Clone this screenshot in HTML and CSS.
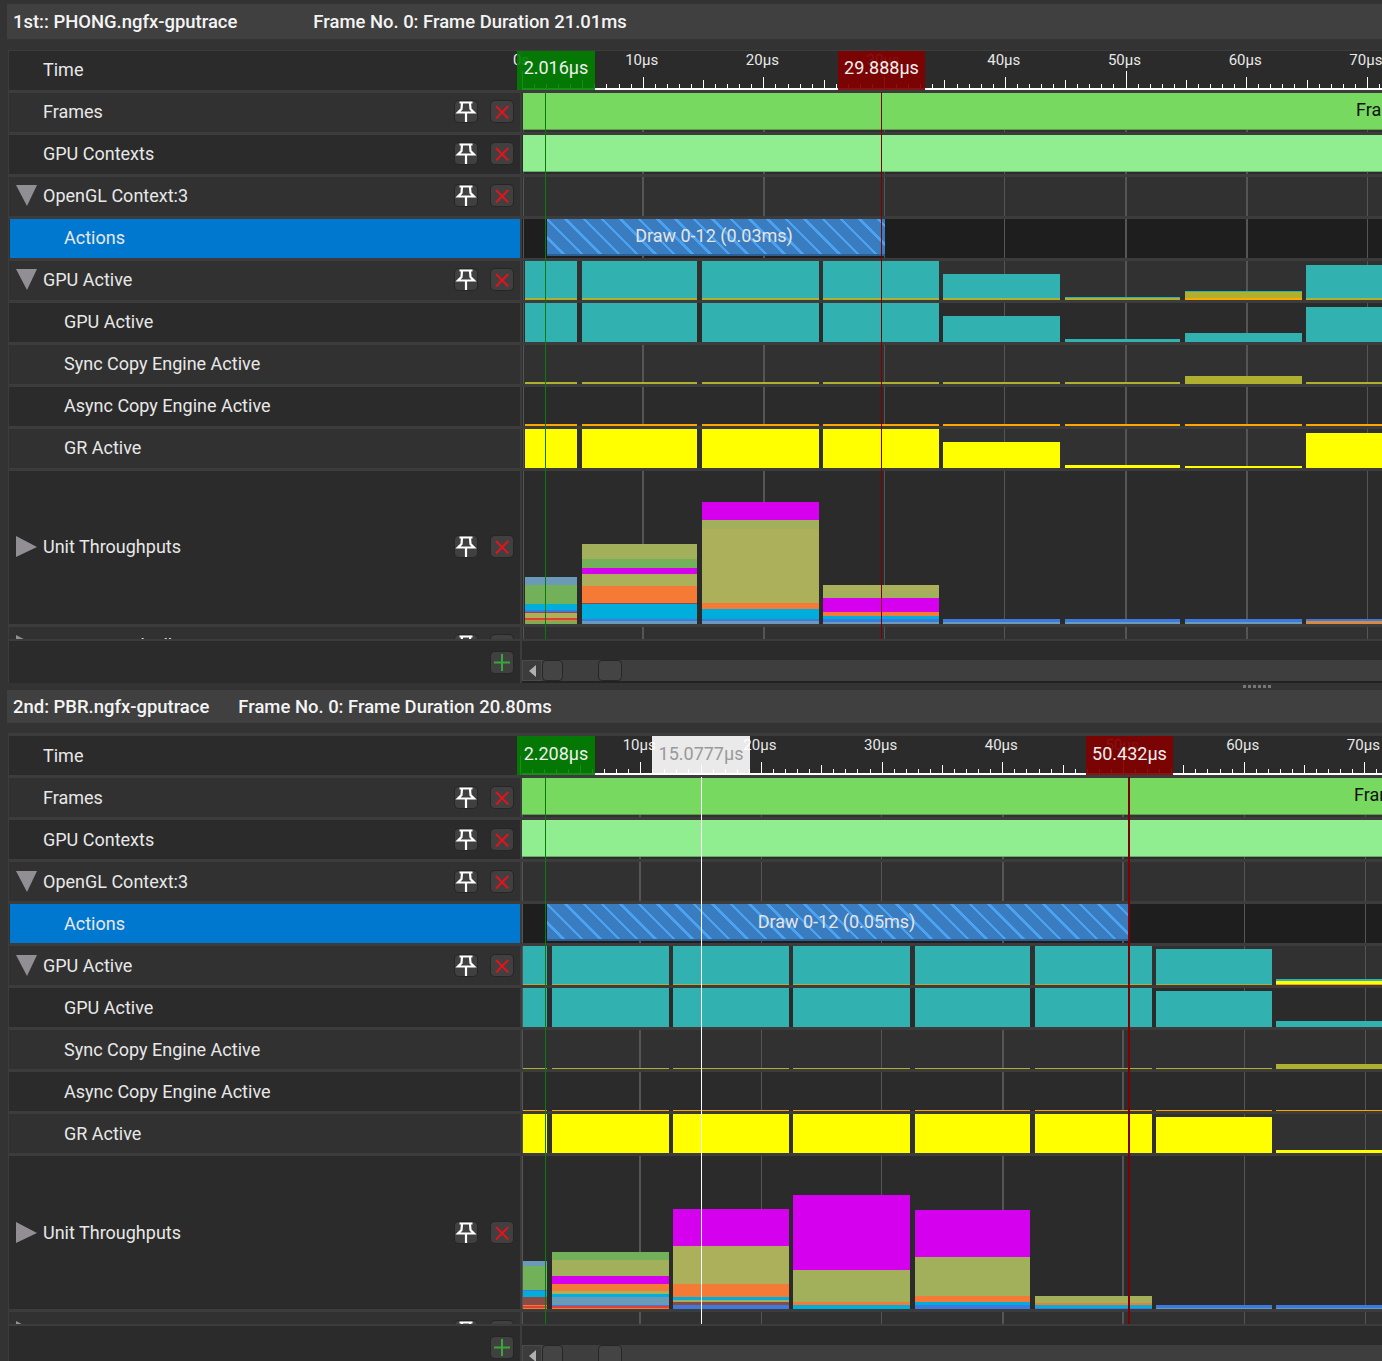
FILE: index.html
```html
<!DOCTYPE html>
<html lang="en">
<head>
    <meta charset="UTF-8">
    <title>Frame Compare</title>
    <link rel="stylesheet" href="styles.css">
</head>
<body>
    <section class="panel panel-first">
        <div class="title-bar">
            <span>1st:: PHONG.ngfx-gputrace</span>
            <span class="frame-info">Frame No. 0: Frame Duration 21.01ms</span>
        </div>
        <div class="view" id="view1"></div>
        <div class="splitter"><i></i><i></i><i></i><i></i><i></i><i></i></div>
    </section>
    <section class="panel panel-second">
        <div class="title-bar">
            <span>2nd: PBR.ngfx-gputrace</span>
            <span class="frame-info">Frame No. 0: Frame Duration 20.80ms</span>
        </div>
        <div class="view" id="view2"></div>
    </section>
    <script src="script.js"></script>
</body>
</html>
```

FILE: styles.css
```css
html, body {
    margin: 0;
    height: 1361px;
    overflow: hidden;
}
body {
    font-family: Roboto, "Liberation Sans", sans-serif;
    font-size: 18px;
    color: #e8e8e8;
    background: #333;
}
.title-bar {
    display: flex;
    align-items: center;
    margin-left: 7px;
    padding-left: 6px;
    background: #404040;
    color: #f4f4f4;
    font-size: 18.45px;
    font-weight: 500;
}
.panel-first { padding-top: 4px; }
.panel-first .title-bar { height: 35px; margin-bottom: 11px; }
.panel-first .frame-info { margin-left: 76px; }
.panel-first .view { height: 632px; border-top: 1px solid #3c3c3c; }
.panel-first .label { padding-bottom: 2px; }
.panel-second .title-bar { height: 33px; margin-bottom: 10px; }
.panel-second .frame-info { margin-left: 29px; }
.panel-second .view { height: 625px; border-top: 3px solid #3c3c3c; }
.panel-second .flag { line-height: 36px; }
.panel-second .draw { line-height: 36px; }

.view {
    position: relative;
    margin-left: 8px;
    border-left: 1px solid #3c3c3c;
    overflow: hidden;
}
.splitter {
    display: flex;
    align-items: center;
    gap: 2px;
    height: 7px;
    padding-left: 1243px;
}
.splitter i {
    width: 3px;
    height: 3px;
    background: #777;
}

/* rows */
.row {
    display: flex;
    height: 39px;
    border-bottom: 3px solid #3c3c3c;
}
.row-tall { height: 153px; }
.shade-a { background: #313131; }
.shade-b { background: #2b2b2b; }
.label {
    display: flex;
    align-items: center;
    flex: none;
    width: 513px;
    padding-left: 34px;
    box-sizing: border-box;
    border-right: 2px solid #3c3c3c;
}
.label-twisty { padding-left: 7px; }
.label-sub { padding-left: 55px; }
.label-selected {
    margin-left: 1px;
    width: 512px;
    padding-left: 54px;
    background: #0078d0;
}
.twisty {
    flex: none;
    margin-right: 6px;
    width: 0;
    height: 0;
}
.twisty-down {
    border-left: 11px solid transparent;
    border-right: 10px solid transparent;
    border-top: 21px solid #918f94;
}
.twisty-right {
    border-top: 11px solid transparent;
    border-bottom: 10px solid transparent;
    border-left: 21px solid #918f94;
}
.actions {
    display: flex;
    gap: 14px;
    margin-left: auto;
    margin-right: 7px;
}
.btn {
    display: block;
    width: 22px;
    height: 21px;
    box-sizing: border-box;
    background: #404040;
    border-radius: 4px;
    box-shadow: 0 0 0 1px #262626;
}
.btn svg {
    display: block;
    fill: none;
    stroke-width: 2;
}
.btn .pin {
    stroke: #fff;
    stroke-width: 2.2;
}
.close { stroke: #e0141c; }
.add { stroke: #3aa53a; }

/* tracks */
.track {
    position: relative;
    flex: 1;
    overflow: hidden;
}
.track-dark { background: #1e1e1e; }
.grid {
    position: absolute;
    top: 0;
    bottom: 0;
    background: #555;
}
.bar {
    position: absolute;
    bottom: 0;
    display: flex;
    flex-direction: column;
}
.fill-frames, .fill-contexts {
    position: absolute;
    top: 0;
    right: 0;
    height: 37px;
    box-sizing: border-box;
}
.fill-frames {
    background: #78d961;
    border-bottom: 1px solid #5c9e4c;
    color: #111;
    line-height: 34px;
}
.fill-frames span {
    position: absolute;
    white-space: nowrap;
}
.fill-contexts {
    background: #90ee90;
    border-bottom: 1px solid #6aad6a;
}
.draw {
    position: absolute;
    top: 0;
    height: 37px;
    box-sizing: border-box;
    padding-right: 4px;
    border-bottom: 2px solid #2c5f92;
    background: repeating-linear-gradient(45deg, #3a7cc0 0 10.5px, #4aa2f0 10.5px 13px);
    text-align: center;
    line-height: 34px;
    color: #e4e4e4;
}
.c-a2 { background: #a2b05c; }
.c-ol { background: #adb05a; }
.c-gr { background: #72b05a; }
.c-mg { background: #d500ee; }
.c-or { background: #f57a35; }
.c-cy { background: #00aedb; }
.c-bl { background: #3d7ae0; }
.c-st { background: #6a9ab8; }
.c-br { background: #8a4a45; }
.c-rd { background: #e0402f; }
.c-ob { background: #d98a40; }
.c-teal { background: #31b2b0; }
.c-sync { background: #b0b030; }
.c-amber { background: #ffa500; }
.c-yellow { background: #ffff00; }

/* ruler */
.ruler {
    position: relative;
    flex: 1;
}
.ruler-line {
    position: absolute;
    left: 0;
    right: 0;
    bottom: 0;
    height: 2px;
    background: #fff;
}
.tick {
    position: absolute;
    bottom: 0;
    width: 1px;
    height: 6px;
    background: #fff;
}
.tick-5 { height: 10px; }
.tick-10 { height: 13px; }
.tick-50 { height: 19px; }
.time {
    position: absolute;
    top: 0;
    width: 60px;
    margin-left: -31px;
    text-align: center;
    font-size: 15px;
    line-height: 18px;
}

/* overlays */
.marker {
    position: absolute;
    top: 41px;
    height: 547px;
    width: 1px;
}
.marker-green { background: #0a7a0a; }
.marker-red { background: #800000; }
.marker-wide { width: 2px; }
.marker-white { background: #fff; }
.flag {
    position: absolute;
    top: 0;
    height: 39px;
    text-align: center;
    line-height: 34px;
    color: #f0f0f0;
}
.flag-green { background: rgba(0, 128, 0, 0.9); }
.flag-red { background: rgba(128, 0, 0, 0.93); }
.flag-white {
    background: rgba(255, 255, 255, 0.9);
    color: #999;
}
.footer {
    position: absolute;
    top: 588px;
    left: 0;
    right: 0;
    height: 42px;
    display: flex;
    background: #2b2b2b;
    border-top: 2px solid #3c3c3c;
}
.footer-left {
    display: flex;
    justify-content: flex-end;
    align-items: flex-start;
    flex: none;
    width: 513px;
    padding: 11px 7px 0 0;
    box-sizing: border-box;
    border-right: 2px solid #3c3c3c;
}
.scrollbar {
    display: flex;
    flex: 1;
    height: 21px;
    margin-top: 19px;
    background: #3e3e3e;
    box-shadow: 0 2px 0 #222;
}
.scroll-arrow {
    display: flex;
    align-items: center;
    justify-content: center;
    width: 20px;
    height: 21px;
    box-sizing: border-box;
    background: #3c3c3c;
    border: 1px solid #4a4a4a;
}
.scroll-arrow::before {
    content: "";
    border-top: 6px solid transparent;
    border-bottom: 6px solid transparent;
    border-right: 7px solid #b0b0b0;
}
.thumb {
    width: 21px;
    height: 21px;
    box-sizing: border-box;
    background: #444;
    border: 1px solid #262626;
    border-radius: 4px;
}
.thumb-end {
    width: 24px;
    margin-left: 35px;
}
```

FILE: script.js
```js
const PIN = '<svg class="pin" width="22" height="21" viewBox="0 0 22 21"><path d="M4.5 1.5H17.5M7 2L6.5 8L3 11.5H19L15.5 8L15 2M11 12V21"/></svg>';
const CLOSE = '<svg class="close" width="22" height="21" viewBox="0 0 22 21"><path d="M5 5L17.3 17.5M17.3 5L5 17.5"/></svg>';
const ADD = '<svg class="add" width="22" height="21" viewBox="0 0 22 21"><path d="M11 2V19M3 10.5H19"/></svg>';
const TRACK_LEFT = 522;

const ROWS = [
    { key: 'frames', name: 'Frames', shade: 'a', actions: true },
    { key: 'contexts', name: 'GPU Contexts', shade: 'b', actions: true },
    { key: 'opengl', name: 'OpenGL Context:3', shade: 'a', actions: true, twisty: 'down' },
    { key: 'draw', name: 'Actions', shade: 'a', sub: true, selected: true },
    { key: 'gpu', name: 'GPU Active', shade: 'a', actions: true, twisty: 'down' },
    { key: 'gpuSub', name: 'GPU Active', shade: 'b', sub: true },
    { key: 'sync', name: 'Sync Copy Engine Active', shade: 'a', sub: true },
    { key: 'async', name: 'Async Copy Engine Active', shade: 'b', sub: true },
    { key: 'gr', name: 'GR Active', shade: 'a', sub: true },
    { key: 'unit', name: 'Unit Throughputs', shade: 'b', actions: true, twisty: 'right', tall: true },
    { key: 'hiddenA', name: 'Compressed Fill', shade: 'a', actions: true, twisty: 'right' },
    { key: 'hiddenB', name: 'Unit Utilization', shade: 'b', actions: true, twisty: 'right' }
];

// each stack: [colour class, height] from top to bottom
const panels = [
    {
        id: 'view1',
        zero: 522,
        pxPerUs: 12.07,
        showZero: true,
        fillFrom: 523,
        grid: [[523, 1], [642, 2], [763, 2], [884, 1], [1004, 1], [1125, 2], [1246, 2], [1367, 1]],
        cols: [[525, 577], [582, 697], [702, 819], [823, 939], [943, 1060], [1065, 1180], [1185, 1302], [1306, 1400]],
        frameText: 1356,
        draw: { from: 547, to: 885, text: 'Draw 0-12 (0.03ms)' },
        flags: [
            { cls: 'flag-green', from: 517, to: 595, text: '2.016\u00b5s' },
            { cls: 'flag-red', from: 838, to: 925, text: '29.888\u00b5s' }
        ],
        markers: [['marker-green', 545], ['marker-red', 881]],
        gpu: [[['c-teal', 37], ['c-sync', 2]], [['c-teal', 37], ['c-sync', 2]], [['c-teal', 37], ['c-sync', 2]], [['c-teal', 37], ['c-sync', 2]],
            [['c-teal', 24], ['c-sync', 2]], [['c-teal', 1], ['c-sync', 2]], [['c-teal', 1], ['c-sync', 6], ['c-amber', 2]], [['c-teal', 33], ['c-sync', 2]]],
        gpuSub: [39, 39, 39, 39, 26, 3, 9, 35].map(h => [['c-teal', h]]),
        sync: [2, 2, 2, 2, 2, 2, 8, 2].map(h => [['c-sync', h]]),
        async: [2, 2, 2, 2, 2, 2, 2, 2].map(h => [['c-amber', h]]),
        gr: [39, 39, 39, 39, 26, 3, 2, 35].map(h => [['c-yellow', h]]),
        unit: [
            [['c-st', 8], ['c-gr', 19], ['c-cy', 6], ['c-bl', 2], ['c-br', 1], ['c-ol', 5], ['c-rd', 2], ['c-or', 1], ['c-gr', 3]],
            [['c-a2', 15], ['c-gr', 9], ['c-mg', 6], ['c-ol', 12], ['c-or', 17], ['c-br', 1], ['c-cy', 15], ['c-bl', 2], ['c-st', 3]],
            [['c-mg', 18], ['c-a2', 9], ['c-ol', 74], ['c-or', 6], ['c-cy', 10], ['c-bl', 2], ['c-st', 3]],
            [['c-ol', 6], ['c-a2', 7], ['c-mg', 14], ['c-or', 4], ['c-cy', 3], ['c-bl', 3], ['c-st', 2]],
            [['c-bl', 3], ['c-st', 2]],
            [['c-bl', 3], ['c-st', 2]],
            [['c-bl', 3], ['c-st', 2]],
            [['c-bl', 2], ['c-ob', 3]]
        ],
        hiddenB: [[525, 543], [563, 577]]
    },
    {
        id: 'view2',
        zero: 519.5,
        pxPerUs: 12.07,
        showZero: false,
        fillFrom: 522,
        grid: [[522, 1], [639, 2], [761, 1], [881, 1], [1002, 2], [1122, 2], [1244, 1], [1365, 1]],
        cols: [[523, 547], [552, 669], [673, 789], [793, 910], [915, 1030], [1035, 1152], [1156, 1272], [1276, 1400]],
        frameText: 1354,
        draw: { from: 547, to: 1130, text: 'Draw 0-12 (0.05ms)' },
        flags: [
            { cls: 'flag-green', from: 517, to: 595, text: '2.208\u00b5s' },
            { cls: 'flag-white', from: 652, to: 750, text: '15.0777\u00b5s' },
            { cls: 'flag-red', from: 1086, to: 1173, text: '50.432\u00b5s' }
        ],
        markers: [['marker-green', 545], ['marker-white', 701], ['marker-red marker-wide', 1128]],
        gpu: [[['c-teal', 38], ['c-sync', 1]], [['c-teal', 38], ['c-sync', 1]], [['c-teal', 38], ['c-sync', 1]], [['c-teal', 38], ['c-sync', 1]],
            [['c-teal', 38], ['c-sync', 1]], [['c-teal', 38], ['c-sync', 1]], [['c-teal', 35], ['c-sync', 1]], [['c-teal', 2], ['c-yellow', 3], ['c-amber', 1]]],
        gpuSub: [39, 39, 39, 39, 39, 39, 36, 6].map(h => [['c-teal', h]]),
        sync: [1, 1, 1, 1, 1, 1, 1, 5].map(h => [['c-sync', h]]),
        async: [1, 1, 1, 1, 1, 1, 1, 1].map(h => [['c-amber', h]]),
        gr: [39, 39, 39, 39, 39, 39, 36, 3].map(h => [['c-yellow', h]]),
        unit: [
            [['c-st', 5], ['c-gr', 24], ['c-bl', 1], ['c-cy', 6], ['c-br', 8], ['c-or', 1], ['c-rd', 2], ['c-or', 1]],
            [['c-gr', 8], ['c-a2', 16], ['c-mg', 8], ['c-or', 7], ['c-ol', 3], ['c-cy', 3], ['c-st', 8], ['c-bl', 1], ['c-rd', 2], ['c-or', 1]],
            [['c-mg', 37], ['c-ol', 38], ['c-or', 13], ['c-cy', 3], ['c-a2', 2], ['c-br', 3], ['c-bl', 4]],
            [['c-mg', 75], ['c-a2', 32], ['c-or', 3], ['c-cy', 4]],
            [['c-mg', 47], ['c-a2', 39], ['c-or', 6], ['c-cy', 3], ['c-bl', 4]],
            [['c-a2', 7], ['c-or', 2], ['c-cy', 3], ['c-bl', 1]],
            [['c-bl', 3], ['c-st', 1]],
            [['c-bl', 3], ['c-st', 1]]
        ],
        hiddenB: []
    }
];

function makeBar(from, to, stack) {
    const segs = stack.map(([color, h]) => `<div class="${color}" style="height:${h}px"></div>`).join('');
    return `<div class="bar" style="left:${from - TRACK_LEFT}px;width:${to - from}px">${segs}</div>`;
}

function renderRuler(panel) {
    let html = '<div class="ruler"><div class="ruler-line"></div>';
    for (let us = 0; us <= 72; us++) {
        let cls = 'tick';
        if (us % 50 === 0) cls += ' tick-50';
        else if (us % 10 === 0) cls += ' tick-10';
        else if (us % 5 === 0) cls += ' tick-5';
        html += `<div class="${cls}" style="left:${panel.zero + us * panel.pxPerUs - TRACK_LEFT}px"></div>`;
    }
    for (let us = panel.showZero ? 0 : 10; us <= 70; us += 10) {
        const text = us === 0 ? '0s' : us + '\u00b5s';
        html += `<div class="time" style="left:${panel.zero + us * panel.pxPerUs - TRACK_LEFT}px">${text}</div>`;
    }
    return html + '</div>';
}

function renderTrack(panel, row) {
    let html = panel.grid.map(([x, w]) => `<div class="grid" style="left:${x - TRACK_LEFT}px;width:${w}px"></div>`).join('');
    const fillLeft = panel.fillFrom - TRACK_LEFT;
    if (row.key === 'frames') {
        html += `<div class="fill-frames" style="left:${fillLeft}px"><span style="left:${panel.frameText - panel.fillFrom}px">Frame 0</span></div>`;
    } else if (row.key === 'contexts') {
        html += `<div class="fill-contexts" style="left:${fillLeft}px"></div>`;
    } else if (row.key === 'draw') {
        const d = panel.draw;
        html += `<div class="draw" style="left:${d.from - TRACK_LEFT}px;width:${d.to - d.from}px">${d.text}</div>`;
    } else if (row.key === 'hiddenB') {
        html += panel.hiddenB.map(([from, to]) => makeBar(from, to, [['c-yellow', 25]])).join('');
    } else if (panel[row.key]) {
        html += panel[row.key].map((stack, i) => makeBar(panel.cols[i][0], panel.cols[i][1], stack)).join('');
    }
    const dark = row.key === 'draw' ? ' track-dark' : '';
    return `<div class="track${dark}">${html}</div>`;
}

function renderLabel(row) {
    let cls = 'label';
    if (row.twisty) cls += ' label-twisty';
    if (row.sub) cls += ' label-sub';
    if (row.selected) cls += ' label-selected';
    const twisty = row.twisty ? `<span class="twisty twisty-${row.twisty}"></span>` : '';
    const actions = row.actions ? `<span class="actions"><span class="btn">${PIN}</span><span class="btn">${CLOSE}</span></span>` : '';
    return `<div class="${cls}">${twisty}<span>${row.name}</span>${actions}</div>`;
}

panels.forEach(panel => {
    let html = `<div class="row shade-b"><div class="label"><span>Time</span></div>${renderRuler(panel)}</div>`;
    ROWS.forEach(row => {
        const tall = row.tall ? ' row-tall' : '';
        html += `<div class="row shade-${row.shade}${tall}">${renderLabel(row)}${renderTrack(panel, row)}</div>`;
    });
    panel.markers.forEach(([cls, x]) => {
        html += `<div class="marker ${cls}" style="left:${x - 9}px"></div>`;
    });
    panel.flags.forEach(f => {
        html += `<div class="flag ${f.cls}" style="left:${f.from - 9}px;width:${f.to - f.from}px">${f.text}</div>`;
    });
    html += `<div class="footer"><div class="footer-left"><span class="btn">${ADD}</span></div>
        <div class="scrollbar"><div class="scroll-arrow"></div><div class="thumb"></div><div class="thumb thumb-end"></div></div></div>`;
    document.getElementById(panel.id).innerHTML = html;
});
```
